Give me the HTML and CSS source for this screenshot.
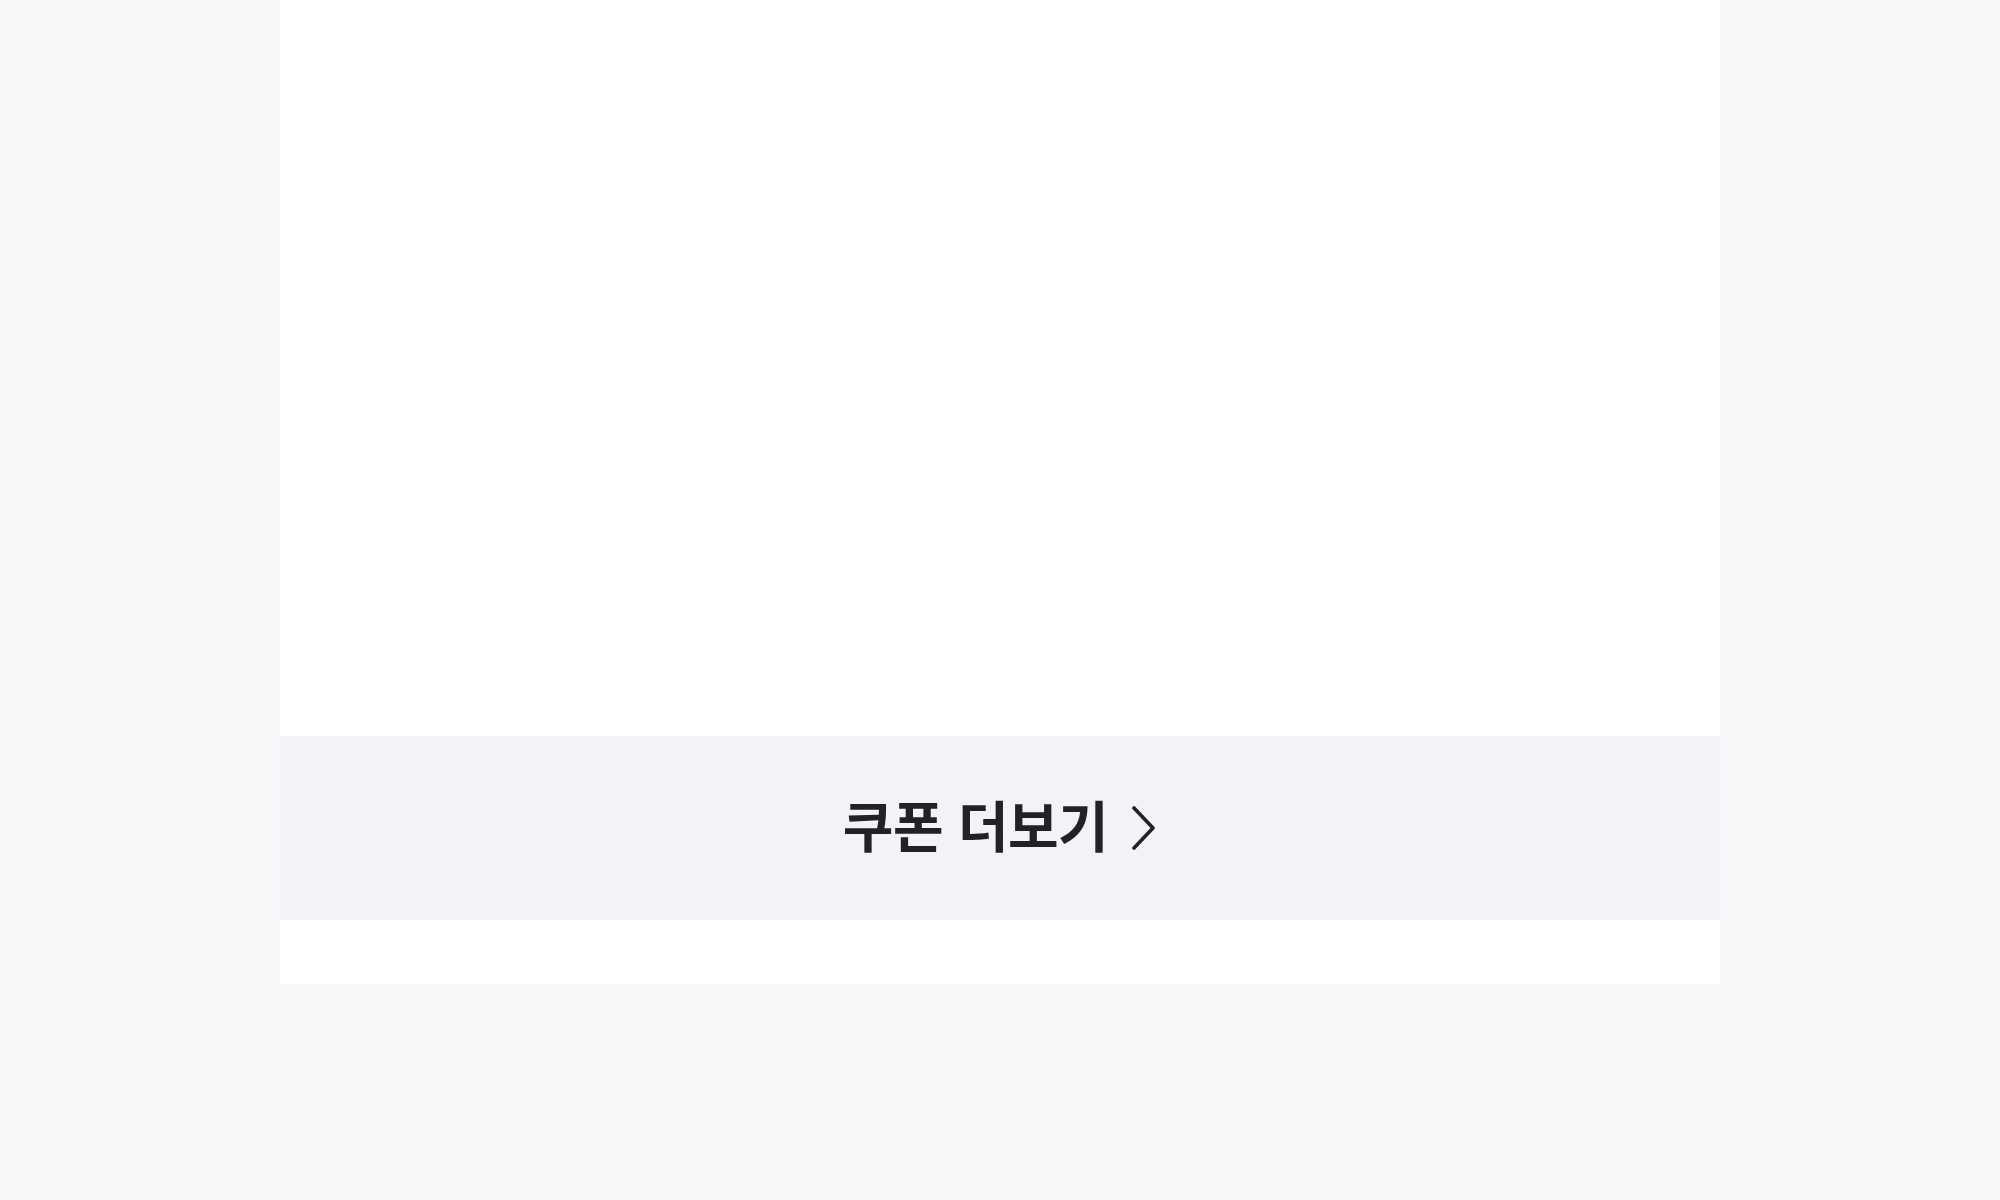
FILE: index.html
```html
<!DOCTYPE html>
<html lang="ko">
<head>
<meta charset="utf-8">
<link rel="stylesheet" href="styles.css">
</head>
<body>
<div class="page">
  <main class="panel">
    <section class="coupon-list"></section>
    <a class="more-btn" href="#">
      <span class="more-label">쿠폰 더보기</span>
      <svg class="chev" width="26" height="44" viewBox="0 0 26 44" aria-hidden="true">
        <path d="M3 2 L22 22 L3 42" fill="none" stroke="#222226" stroke-width="3.6" stroke-linecap="round" stroke-linejoin="round"/>
      </svg>
    </a>
    <div class="panel-foot"></div>
  </main>
</div>
</body>
</html>
```

FILE: styles.css
```css
html, body {
  margin: 0;
  padding: 0;
  background: #f7f8fa;
}
body {
  font-family: "Noto Sans CJK KR", "Noto Sans", sans-serif;
  width: 2000px;
  height: 1200px;
  overflow: hidden;
}
.page {
  display: flex;
  justify-content: center;
  height: 1200px;
}
.panel {
  width: 1440px;
  height: 984px;
  background: #ffffff;
  display: flex;
  flex-direction: column;
}
.coupon-list {
  height: 736px;
}
.more-btn {
  height: 184px;
  background: #f2f3f6;
  display: flex;
  align-items: center;
  justify-content: center;
  gap: 23px;
  text-decoration: none;
  color: #222226;
}
.more-label {
  font-size: 55px;
  font-weight: 700;
  letter-spacing: -0.5px;
  line-height: 1;
  margin-top: -10px;
}
.chev {
  display: block;
  margin-top: 0;
}
.panel-foot {
  height: 64px;
}
```
